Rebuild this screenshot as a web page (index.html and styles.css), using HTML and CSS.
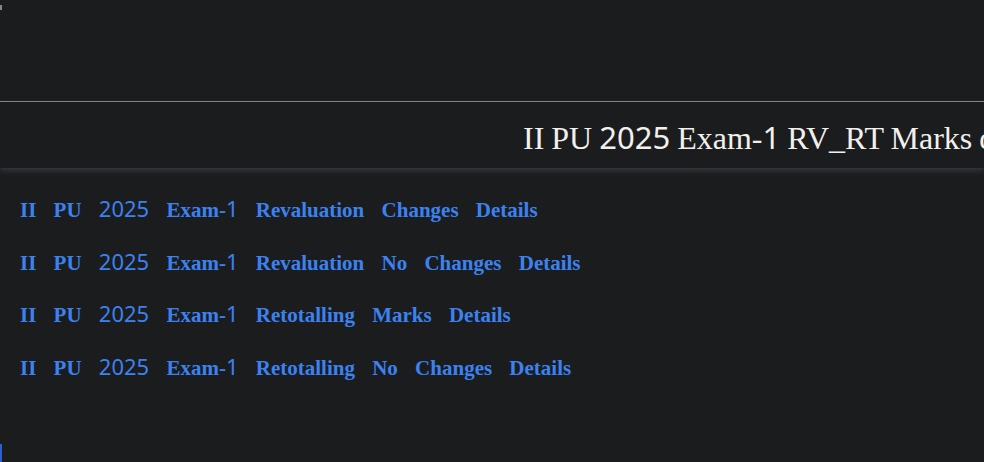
FILE: index.html
```html
<!DOCTYPE html>
<html lang="en">
<head>
    <meta charset="UTF-8">
    <meta name="viewport" content="width=device-width, initial-scale=1.0">
    <title>II PU 2025 Exam-1 RV_RT Marks details</title>
    <link rel="stylesheet" href="styles.css">
</head>
<body>

<div class="top">
    <span class="mark"></span>
</div>
<hr class="rule">

<div class="header">
    <h1 class="title">II PU <span class="num">2025</span> Exam-<span class="num">1</span> RV_RT Marks details</h1>
</div>

<ul class="links">
    <li><a href="#">II PU <span class="num">2025</span> Exam-<span class="num">1</span> Revaluation Changes Details</a></li>
    <li><a href="#">II PU <span class="num">2025</span> Exam-<span class="num">1</span> Revaluation No Changes Details</a></li>
    <li><a href="#">II PU <span class="num">2025</span> Exam-<span class="num">1</span> Retotalling Marks Details</a></li>
    <li><a href="#">II PU <span class="num">2025</span> Exam-<span class="num">1</span> Retotalling No Changes Details</a></li>
</ul>

<span class="focus"></span>

</body>
</html>
```

FILE: styles.css
```css
body { margin: 0; background-color: #1b1c1e; font-family: "Liberation Serif", "Times New Roman", serif; height: 462px; overflow: hidden; position: relative; }
.top { height: 101px; padding: 0; overflow: hidden; }
.mark { display: block; width: 2px; height: 5px; margin-top: 5px; background-color: #8a857e; }
.rule { margin: 0; border: none; height: 1px; background-color: #8d8a85; }
.header { height: 66px; background-color: #1b1c1e; box-shadow: 0 2px 6px rgba(80, 86, 92, 0.6); white-space: nowrap; overflow: hidden; }
.title { margin: 0; padding: 17px 0 0 523px; font-size: 32px; font-weight: normal; color: #f2f0ec; line-height: 36px; word-spacing: -1px; }
.title .num { font-family: "Noto Sans", "Open Sans", sans-serif; font-size: 31px; }
.links { list-style: none; margin: 25px 0 0 0; padding: 0 0 0 20px; }
.links li { height: 52.5px; }
.links a { color: #3b82f0; text-decoration: none; font-weight: bold; font-size: 21px; word-spacing: 12px; line-height: 30px; }
.links .num { font-family: "Noto Sans", "Open Sans", sans-serif; font-weight: normal; font-size: 22px; }
.focus { position: absolute; left: 0; bottom: 0; width: 2px; height: 18px; background-color: #2d5fd0; }
```
